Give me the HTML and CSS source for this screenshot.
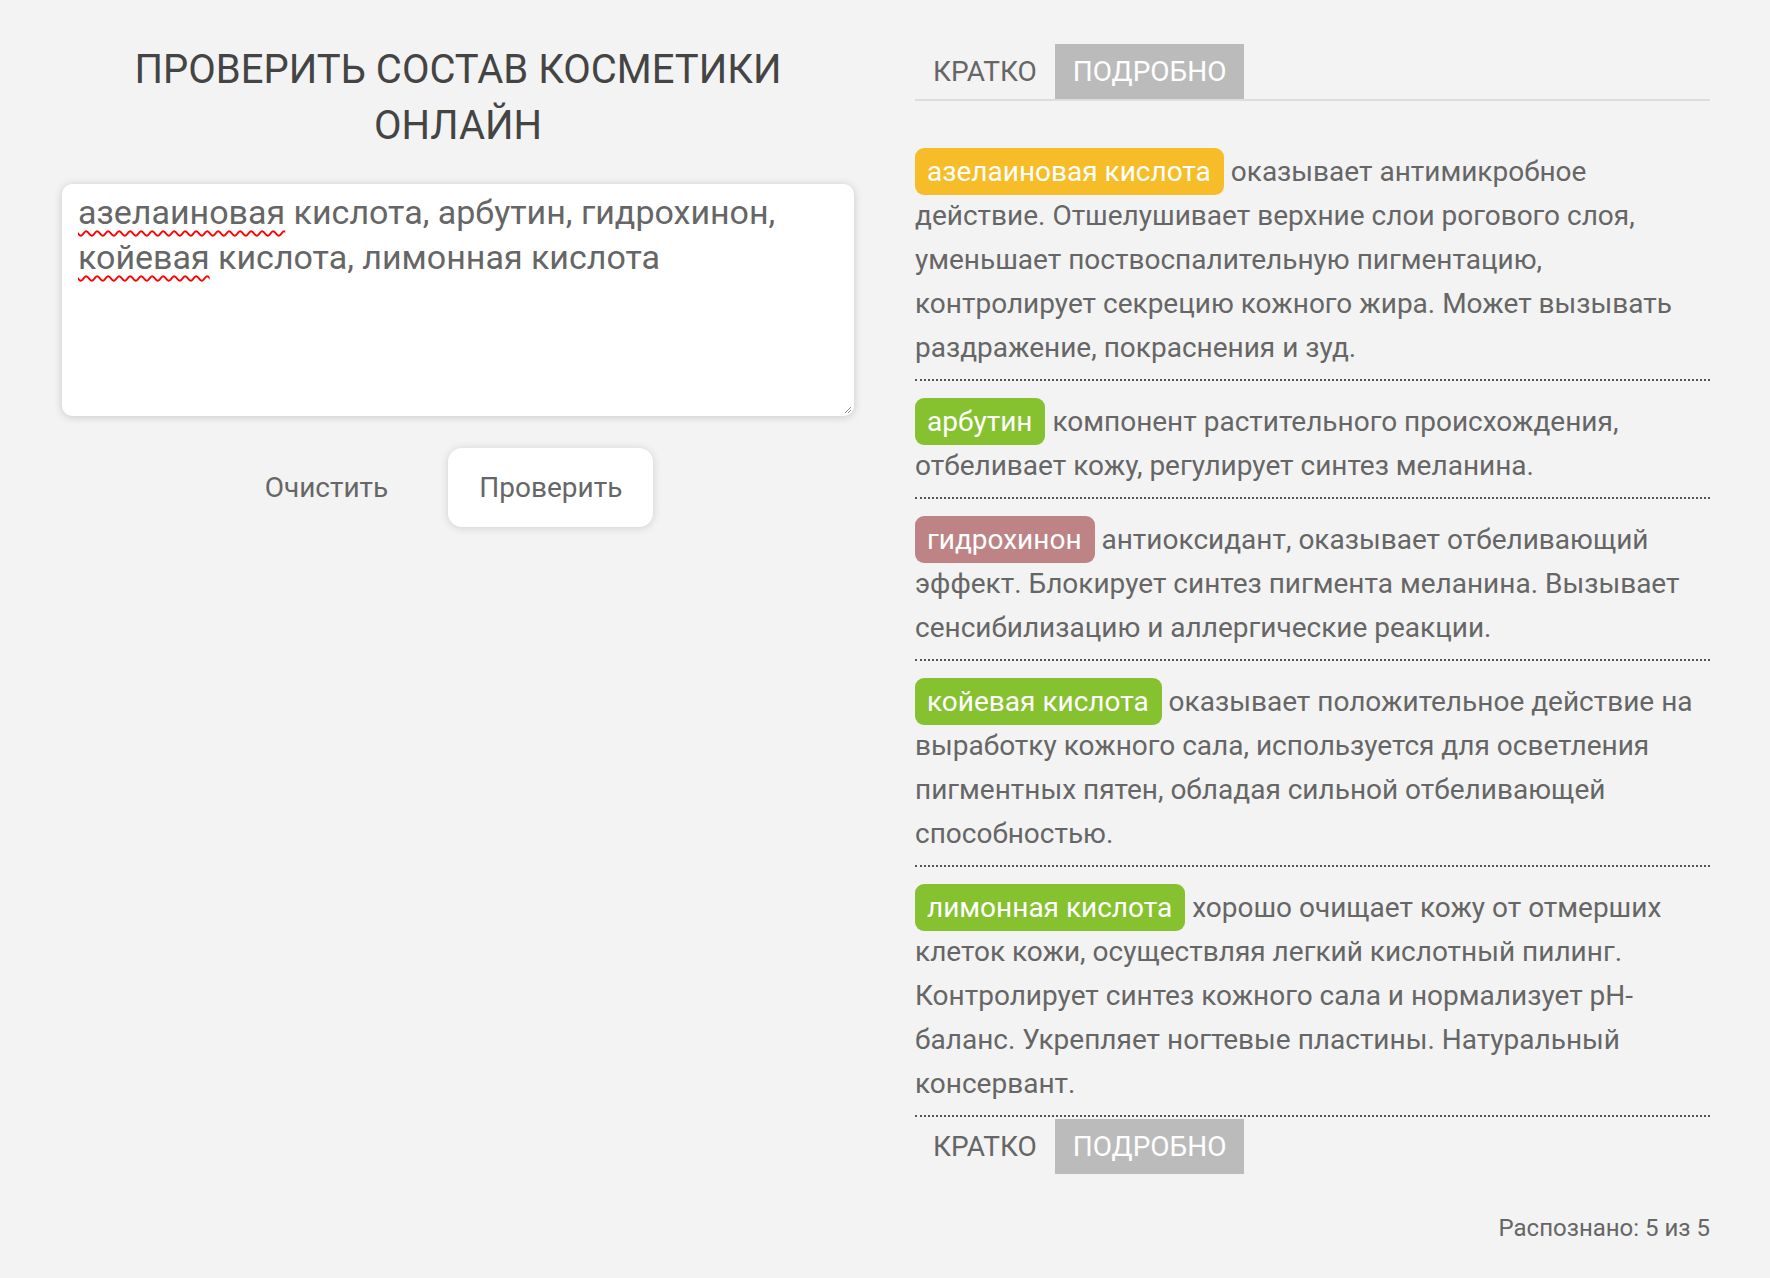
FILE: index.html
```html
<!DOCTYPE html>
<html>
<head>
  <link rel="stylesheet" href="styles.css">
</head>
<body>
  <div class="page">
    <div class="checker">
      <h1 class="checker-title">Проверить состав косметики онлайн</h1>

      <div class="checker-input">
        <span class="typo">азелаиновая</span> кислота, арбутин, гидрохинон, <span class="typo">койевая</span> кислота, лимонная кислота
        <svg class="grip" width="8" height="8" viewBox="0 0 8 8">
          <path d="M7 1 L1 7 M7 4 L4 7" stroke="#888" stroke-width="1" fill="none"/>
        </svg>
      </div>

      <div class="checker-actions">
        <button class="btn btn-clear">Очистить</button>
        <button class="btn btn-check">Проверить</button>
      </div>
    </div>

    <div class="result">
      <div class="tabs tabs-top">
        <span class="tab">Кратко</span>
        <span class="tab tab-active">Подробно</span>
      </div>

      <div class="items">
        <div class="item">
          <span class="tag tag-yellow">азелаиновая кислота</span> оказывает антимикробное действие. Отшелушивает верхние слои рогового слоя, уменьшает поствоспалительную пигментацию, контролирует секрецию кожного жира. Может вызывать раздражение, покраснения и зуд.
        </div>
        <div class="item">
          <span class="tag tag-green">арбутин</span> компонент растительного происхождения, отбеливает кожу, регулирует синтез меланина.
        </div>
        <div class="item">
          <span class="tag tag-red">гидрохинон</span> антиоксидант, оказывает отбеливающий эффект. Блокирует синтез пигмента меланина. Вызывает сенсибилизацию и аллергические реакции.
        </div>
        <div class="item">
          <span class="tag tag-green">койевая кислота</span> оказывает положительное действие на выработку кожного сала, используется для осветления пигментных пятен, обладая сильной отбеливающей способностью.
        </div>
        <div class="item">
          <span class="tag tag-green">лимонная кислота</span> хорошо очищает кожу от отмерших клеток кожи, осуществляя легкий кислотный пилинг. Контролирует синтез кожного сала и нормализует pH-баланс. Укрепляет ногтевые пластины. Натуральный консервант.
        </div>
      </div>

      <div class="tabs">
        <span class="tab">Кратко</span>
        <span class="tab tab-active">Подробно</span>
      </div>

      <div class="recognized">Распознано: 5 из 5</div>
    </div>
  </div>
</body>
</html>
```

FILE: styles.css
```css
body {
  margin: 0;
  background-color: #f3f3f3;
  font-family: Roboto, "Noto Sans", sans-serif;
  color: #666666;
}

.page {
  display: grid;
  grid-template-columns: 792px 795px;
  column-gap: 61px;
  padding: 0 60px 0 62px;
}

/* left column */

.checker-title {
  margin: 42px 0 30px;
  font-size: 40px;
  font-weight: 400;
  line-height: 56px;
  color: #444444;
  text-align: center;
  text-transform: uppercase;
}

.checker-input {
  position: relative;
  height: 232px;
  box-sizing: border-box;
  padding: 6px 16px;
  background-color: #ffffff;
  border-radius: 10px;
  box-shadow: 0 1px 8px rgba(0, 0, 0, 0.18);
  font-size: 34px;
  line-height: 45px;
  color: #666666;
}

.typo {
  text-decoration: underline wavy #ff0000;
  text-decoration-thickness: 1.5px;
  text-underline-offset: 6px;
}

.grip {
  position: absolute;
  right: 2px;
  bottom: 2px;
}

.checker-actions {
  display: flex;
  justify-content: center;
  gap: 29px;
  margin-top: 32px;
  padding-right: 29px;
}

.btn {
  height: 79px;
  padding: 0 31px;
  border: none;
  border-radius: 14px;
  background: transparent;
  font-family: inherit;
  font-size: 28px;
  color: #666666;
  cursor: pointer;
}

.btn-check {
  background-color: #ffffff;
  box-shadow: 0 1px 8px rgba(0, 0, 0, 0.15);
}

/* right column */

.tabs {
  display: flex;
  margin-top: 44px;
}

.tabs-top {
  border-bottom: 2px solid #dddddd;
}

.tab {
  padding: 0 18px;
  font-size: 28px;
  line-height: 55px;
  text-transform: uppercase;
  color: #666666;
}

.tab-active {
  background-color: #bbbbbb;
  color: #ffffff;
}

.items {
  padding-top: 30px;
}

.item {
  padding: 19px 0 9px;
  border-bottom: 2px dotted #555555;
  font-size: 28px;
  line-height: 44px;
}

.items + .tabs {
  margin-top: 2px;
}

.tag {
  padding: 7px 13px 7px 12px;
  border-radius: 9px;
  color: #ffffff;
}

.tag-yellow {
  background-color: #f6bd28;
}

.tag-green {
  background-color: #86c12f;
}

.tag-red {
  background-color: #be8384;
}

.recognized {
  margin-top: 39px;
  font-size: 24px;
  line-height: 30px;
  text-align: right;
}
```
